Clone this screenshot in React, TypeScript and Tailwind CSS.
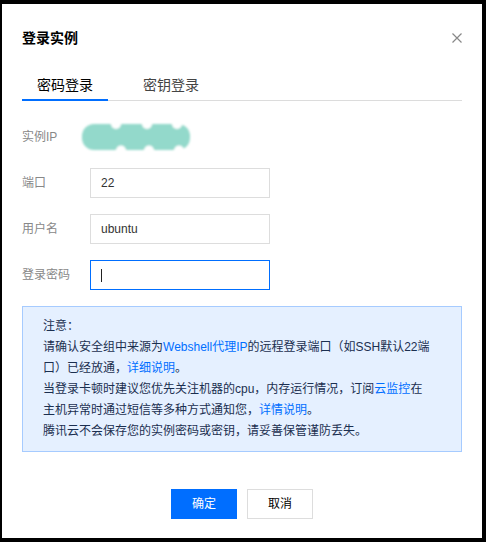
import React from "react";

const font = { fontFamily: '"Liberation Sans", Arial, "Noto Sans CJK SC", sans-serif' };

function Blob() {
  return (
    <svg width="114" height="32" viewBox="0 0 114 32" className="block -ml-[10px]">
      <defs>
        <filter id="bl" x="-10%" y="-30%" width="120%" height="160%">
          <feGaussianBlur stdDeviation="1.1" />
        </filter>
      </defs>
      <g filter="url(#bl)">
        <rect x="2" y="3" width="108" height="26" rx="12" fill="#93d9cb" />
        <circle cx="36" cy="3" r="5" fill="#fff" />
        <circle cx="67" cy="3" r="5" fill="#fff" />
        <circle cx="97" cy="3" r="5" fill="#fff" />
        <circle cx="41" cy="29.5" r="5" fill="#fff" />
        <circle cx="69" cy="29.5" r="5" fill="#fff" />
        <circle cx="99" cy="29.5" r="5" fill="#fff" />
      </g>
    </svg>
  );
}

export default function App() {
  return (
    <div className="w-[486px] h-[542px] bg-black pt-[4px] pl-[2px]" style={font}>
      <div className="w-[480px] h-[534px] bg-white px-[20px] flex flex-col">
        {/* header */}
        <div className="flex items-center justify-between pt-[24px]">
          <div className="text-[14px] leading-[20px] font-bold text-[#000]">登录实例</div>
          <svg width="10" height="10" viewBox="0 0 10 10">
            <path d="M0.5 0.5 L9.5 9.5 M9.5 0.5 L0.5 9.5" stroke="#888" strokeWidth="1.2" />
          </svg>
        </div>

        {/* tabs */}
        <div className="flex items-end gap-[20px] border-b border-[#dcdcdc] mt-[27px]">
          <div className="px-[15px] pb-[4px] text-[14px] leading-[20px] text-[#000] border-b-2 border-[#006eff] -mb-px">
            密码登录
          </div>
          <div className="px-[15px] pb-[4px] text-[14px] leading-[20px] text-[#444] -mb-px border-b-2 border-transparent">
            密钥登录
          </div>
        </div>

        {/* form */}
        <div className="flex flex-col gap-[16px] mt-[21px]">
          <div className="flex items-center h-[30px]">
            <div className="w-[68px] text-[12px] text-[#888]">实例IP</div>
            <Blob />
          </div>
          <div className="flex items-center h-[30px]">
            <div className="w-[68px] text-[12px] text-[#888]">端口</div>
            <div className="w-[180px] h-[30px] border border-[#dddddd] flex items-center px-[10px] text-[12px] text-[#333]">22</div>
          </div>
          <div className="flex items-center h-[30px]">
            <div className="w-[68px] text-[12px] text-[#888]">用户名</div>
            <div className="w-[180px] h-[30px] border border-[#dddddd] flex items-center px-[10px] text-[12px] text-[#333]">ubuntu</div>
          </div>
          <div className="flex items-center h-[30px]">
            <div className="w-[68px] text-[12px] text-[#888]">登录密码</div>
            <div className="w-[180px] h-[30px] border border-[#006eff] flex items-center px-[10px]">
              <span className="block w-[1px] h-[13px] bg-[#222]" />
            </div>
          </div>
        </div>

        {/* notice */}
        <div className="mt-[16px] border border-[#a6cbff] bg-[#e5f0ff] pl-[20px] pr-[10px] pt-[9px] pb-[9px] text-[12px] leading-[21px] text-[#1b2f50] whitespace-nowrap">
          <p>注意：</p>
          <p>
            请确认安全组中来源为<span className="text-[#006eff]">Webshell代理IP</span>的远程登录端口（如SSH默认22端
            <br />
            口）已经放通，<span className="text-[#006eff]">详细说明</span>。
          </p>
          <p>
            当登录卡顿时建议您优先关注机器的cpu，内存运行情况，订阅<span className="text-[#006eff]">云监控</span>在
            <br />
            主机异常时通过短信等多种方式通知您，<span className="text-[#006eff]">详情说明</span>。
          </p>
          <p>腾讯云不会保存您的实例密码或密钥，请妥善保管谨防丢失。</p>
        </div>

        {/* buttons */}
        <div className="flex-1" />
        <div className="flex justify-center gap-[10px] mb-[19px]">
          <div className="w-[66px] h-[30px] bg-[#006eff] text-white text-[12px] flex items-center justify-center">确定</div>
          <div className="w-[66px] h-[30px] border border-[#dddddd] bg-white text-[#000] text-[12px] flex items-center justify-center">取消</div>
        </div>
      </div>
    </div>
  );
}
